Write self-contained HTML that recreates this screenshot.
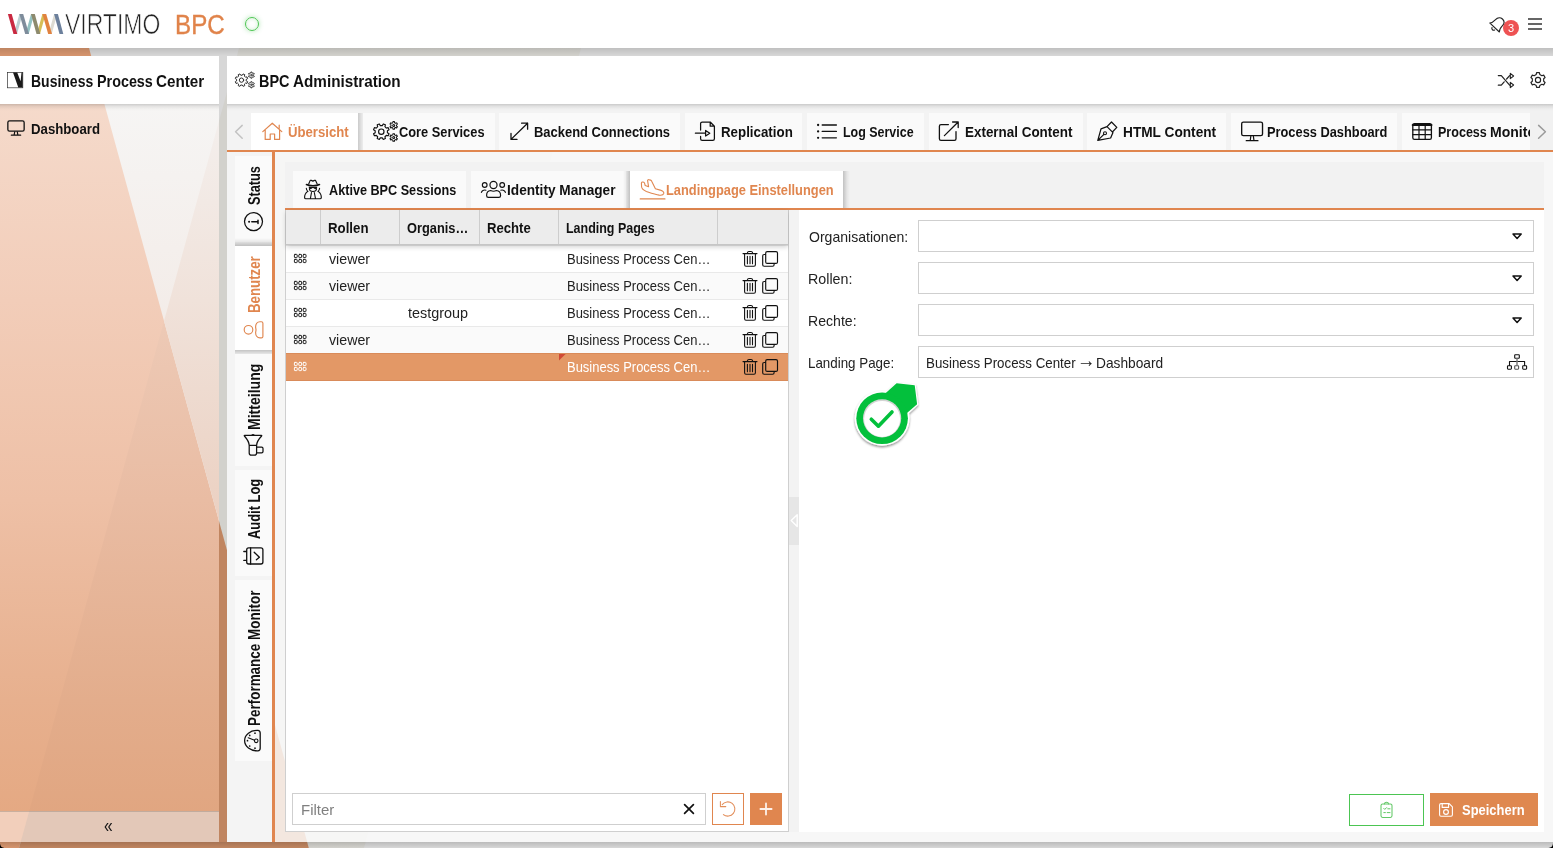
<!DOCTYPE html><html lang="de"><head><meta charset="utf-8"><title>BPC Administration</title><style>
*{box-sizing:border-box;margin:0;padding:0}
html,body{width:1553px;height:848px;overflow:hidden}
body{position:relative;font-family:"Liberation Sans",sans-serif;background:#d6d5d3;color:#1a1a1a}
#app{position:absolute;left:0;top:0;width:1553px;height:848px;overflow:hidden;will-change:transform}
.abs,.t{position:absolute}
.t{white-space:nowrap;display:block}
#bg{position:absolute;left:0;top:0}
#hdr{position:absolute;left:0;top:0;width:1553px;height:48px;background:#fff}
#hshadow{position:absolute;left:0;top:48px;width:1553px;height:8px;background:linear-gradient(rgba(0,0,0,.11),rgba(0,0,0,0))}
#side{position:absolute;left:0;top:56px;width:219px;height:786px;overflow:hidden}
#sidehead{position:absolute;left:0;top:0;width:219px;height:48px;background:#fff}
#sidefoot{position:absolute;left:0;top:755px;width:219px;height:31px;border-top:1px solid rgba(150,135,125,.45)}
#main{position:absolute;left:227px;top:56px;width:1326px;height:786px;background:rgba(255,255,255,.8)}
#mainhead{position:absolute;left:0;top:0;width:1326px;height:48px;background:#fff;z-index:3}
#mainhead:after,#sidehead:after{content:'';position:absolute;left:0;top:100%;width:100%;height:7px;background:linear-gradient(rgba(0,0,0,.17),rgba(0,0,0,.07) 35%,rgba(0,0,0,.02) 70%,rgba(0,0,0,0))}
#tabbar{position:absolute;left:0;top:48px;width:1326px;height:46px;background:#f3f3f3}
#tabbar .line{position:absolute;left:0;top:46px;width:1326px;height:2px;background:#e0864f}
.tab{position:absolute;top:9px;height:37px;background:#fafafa}
.tab.act{background:#fff}
.tab.act:after{content:'';position:absolute;left:100%;top:0;width:6px;height:100%;background:linear-gradient(to right,rgba(0,0,0,.17),rgba(0,0,0,.06) 60%,rgba(0,0,0,0))}
#vbar{position:absolute;left:0;top:96px;width:45px;height:690px;background:#f4f4f4}
#vline{position:absolute;left:45px;top:96px;width:3px;height:690px;background:#e0864f}
.vtab{position:absolute;left:8px;width:37px;background:#fafafa}
.vtab.act{background:#fff}
.vtab.act:before{content:'';position:absolute;left:0;bottom:100%;width:100%;height:8px;background:linear-gradient(to top,rgba(0,0,0,.22),rgba(0,0,0,.07) 55%,rgba(0,0,0,0))}
.vtab.act:after{content:'';position:absolute;left:0;top:100%;width:100%;height:7px;background:linear-gradient(to bottom,rgba(0,0,0,.20),rgba(0,0,0,.06) 55%,rgba(0,0,0,0))}
#inner{position:absolute;left:58px;top:106px;width:1259px;height:670px;background:#f2f2f2}
#inner .line{position:absolute;left:0;top:46px;width:1259px;height:2px;background:#e0864f}
.itab{position:absolute;top:9px;height:37px;background:#fafafa}
.itab.act{background:#fff}
.itab.act:after{content:'';position:absolute;left:100%;top:0;width:7px;height:100%;background:linear-gradient(to right,rgba(0,0,0,.20),rgba(0,0,0,.05) 60%,rgba(0,0,0,0))}
.itab.act:before{content:'';position:absolute;right:100%;top:0;width:7px;height:100%;background:linear-gradient(to left,rgba(0,0,0,.20),rgba(0,0,0,.05) 60%,rgba(0,0,0,0))}
#grid{position:absolute;left:0;top:48px;width:504px;height:622px;background:#fff;border:1px solid #cfcfcf;border-top:none}
#ghead{position:absolute;left:0;top:0;width:502px;height:35px;background:#ececec;border-bottom:1px solid #c6c6c6;box-shadow:0 2px 5px rgba(0,0,0,.18)}
#ghead i{position:absolute;top:0;width:1px;height:34px;background:#cdcdcd}
.row{position:absolute;left:0;width:502px;height:27px;border-top:1px solid #e9e9e9;background:#fff}
.row.alt{background:#fafafa}
.row.sel{background:#e39866;border-bottom:1px solid #d98b5a;border-top:1px solid #d98b5a;height:28px}
#split{position:absolute;left:504px;top:48px;width:10px;height:622px;background:#f3f3f3}
#split b{position:absolute;left:0;top:287px;width:10px;height:48px;background:#e6e6e6}
#form{position:absolute;left:514px;top:48px;width:745px;height:622px;background:#fff}
.fld{position:absolute;left:119px;width:616px;height:32px;border:1px solid #cfcfcf;background:#fff}
.btn{position:absolute;height:32px}
svg{position:absolute;overflow:visible}
</style></head><body><div id="app"><svg id="bg" width="1553" height="848" viewBox="0 0 1553 848">
<defs><clipPath id="cband"><polygon points="252.3,0 594,0 364,848 19,848"/></clipPath></defs>
<rect width="1553" height="848" fill="#d7d7d7"/>
<polygon points="0,0 75.8,0 308.8,848 0,848" fill="#d6956e"/>
<g clip-path="url(#cband)"><rect width="1553" height="848" fill="#d2d1cc"/><polygon points="0,0 75.8,0 308.8,848 0,848" fill="#c08560"/></g>
<linearGradient id="bsh" x1="0" y1="842" x2="0" y2="848" gradientUnits="userSpaceOnUse"><stop offset="0" stop-color="#000" stop-opacity=".13"/><stop offset="1" stop-color="#000" stop-opacity="0"/></linearGradient>
<rect x="0" y="842" width="1553" height="6" fill="url(#bsh)"/>
<path d="M0,843.5 Q0.4,847.6 4.5,848 H0Z M1553,843.5 Q1552.6,847.6 1548.5,848 H1553Z" fill="#000"/>
</svg><div id="hdr"><span class="t" style="font-size:29px;font-weight:normal;color:#222;line-height:29px;left:65.40px;top:10px;transform:scaleX(0.7917);transform-origin:0 24px;-webkit-text-stroke:.7px #fff;">VIRTIMO</span><span class="t" style="font-size:28px;font-weight:normal;color:#e0834a;line-height:28px;left:174.77px;top:11px;transform:scaleX(0.8636);transform-origin:0 23px;-webkit-text-stroke:.35px #e0834a;">BPC</span><div class="abs" style="left:245px;top:17px;width:14px;height:14px;border-radius:50%;border:1.3px solid #4cc552;box-shadow:0 0 5px rgba(76,197,82,.45), inset 0 0 4px rgba(76,197,82,.25)"></div><div class="abs" style="left:1503px;top:20px;width:16px;height:16px;border-radius:50%;background:#ee5253"></div><span class="t" style="font-size:11px;font-weight:normal;color:#fff;line-height:11px;left:1508.10px;top:23px;transform:scaleX(1.0000);transform-origin:0 9px;">3</span><div class="abs" style="left:1528px;top:18px;width:14px;height:2px;background:#666"></div><div class="abs" style="left:1528px;top:23px;width:14px;height:2px;background:#666"></div><div class="abs" style="left:1528px;top:28px;width:14px;height:2px;background:#666"></div></div><div id="hshadow"></div><div id="side"><svg width="219" height="786" viewBox="0 56 219 786" style="left:0;top:0"><defs><linearGradient id="s1" x1="0" y1="104" x2="0" y2="842" gradientUnits="userSpaceOnUse"><stop offset="0.000" stop-color="#f5dacb"/><stop offset="0.266" stop-color="#f2cdb9"/><stop offset="0.537" stop-color="#eec0a6"/><stop offset="0.808" stop-color="#e7b08e"/><stop offset="1.000" stop-color="#e4a780"/></linearGradient><linearGradient id="s2" x1="0" y1="104" x2="0" y2="842" gradientUnits="userSpaceOnUse"><stop offset="0.000" stop-color="#f1dccf"/><stop offset="0.306" stop-color="#edc9b5"/><stop offset="0.537" stop-color="#e9bca3"/><stop offset="0.808" stop-color="#e3ad8c"/><stop offset="1.000" stop-color="#e0a47e"/></linearGradient><linearGradient id="s3" x1="0" y1="104" x2="0" y2="842" gradientUnits="userSpaceOnUse"><stop offset="0.000" stop-color="#f6f5f4"/><stop offset="0.294" stop-color="#f3ece8"/></linearGradient><linearGradient id="s4" x1="0" y1="104" x2="0" y2="842" gradientUnits="userSpaceOnUse"><stop offset="0.000" stop-color="#f4f0ee"/><stop offset="0.266" stop-color="#f0e2da"/><stop offset="0.569" stop-color="#ebd0c1"/></linearGradient></defs><rect x="0" y="56" width="219" height="786" fill="url(#s1)"/><polygon points="164,321 219,521 219,842 20.7,842" fill="url(#s2)"/><polygon points="104.4,104 219,104 219,521" fill="url(#s3)"/><polygon points="219,121 219,521 164,321" fill="url(#s4)"/><rect x="0" y="811" width="219" height="31" fill="#f2cfbb"/><polygon points="29.3,811 219,811 219,842 20.7,842" fill="#e3c8b8"/></svg><div id="sidehead"><span class="t" style="font-size:16.5px;font-weight:bold;color:#111;line-height:16.5px;left:30.85px;top:17px;transform:scaleX(0.8478);transform-origin:0 14px;">Business</span><span class="t" style="font-size:16.5px;font-weight:bold;color:#111;line-height:16.5px;left:96.53px;top:17px;transform:scaleX(0.8694);transform-origin:0 14px;">Process</span><span class="t" style="font-size:16.5px;font-weight:bold;color:#111;line-height:16.5px;left:155.90px;top:17px;transform:scaleX(0.9216);transform-origin:0 14px;">Center</span></div><span class="t" style="font-size:15.5px;font-weight:bold;color:#111;line-height:15.5px;left:30.65px;top:65px;transform:scaleX(0.8517);transform-origin:0 13px;">Dashboard</span><div id="sidefoot"></div><span class="t" style="font-size:19.5px;font-weight:normal;color:#151515;line-height:19.5px;left:104.20px;top:760px;transform:scaleX(0.8000);transform-origin:0 16px;">«</span></div><div id="main"><div id="mainhead"><span class="t" style="font-size:16.5px;font-weight:bold;color:#111;line-height:16.5px;left:32.12px;top:17px;transform:scaleX(0.8756);transform-origin:0 14px;">BPC</span><span class="t" style="font-size:16.5px;font-weight:bold;color:#111;line-height:16.5px;left:66.30px;top:17px;transform:scaleX(0.9249);transform-origin:0 14px;">Administration</span></div><div id="tabbar"><div class="abs" style="left:1303px;top:0;width:23px;height:46px;background:#f1f1f1"></div><div class="tab act" style="left:24px;width:107px;overflow:visible"><span class="t" style="font-size:15.5px;font-weight:bold;color:#e0864f;line-height:15.5px;left:36.50px;top:11px;transform:scaleX(0.8482);transform-origin:0 13px;">Übersicht</span></div><div class="tab" style="left:136px;width:132px;overflow:visible"><span class="t" style="font-size:15.5px;font-weight:bold;color:#111;line-height:15.5px;left:36.00px;top:11px;transform:scaleX(0.8270);transform-origin:0 13px;">Core Services</span></div><div class="tab" style="left:272px;width:181px;overflow:visible"><span class="t" style="font-size:15.5px;font-weight:bold;color:#111;line-height:15.5px;left:35.46px;top:11px;transform:scaleX(0.8358);transform-origin:0 13px;">Backend Connections</span></div><div class="tab" style="left:458px;width:117px;overflow:visible"><span class="t" style="font-size:15.5px;font-weight:bold;color:#111;line-height:15.5px;left:35.64px;top:11px;transform:scaleX(0.8590);transform-origin:0 13px;">Replication</span></div><div class="tab" style="left:580px;width:117px;overflow:visible"><span class="t" style="font-size:15.5px;font-weight:bold;color:#111;line-height:15.5px;left:35.50px;top:11px;transform:scaleX(0.8035);transform-origin:0 13px;">Log Service</span></div><div class="tab" style="left:702px;width:154px;overflow:visible"><span class="t" style="font-size:15.5px;font-weight:bold;color:#111;line-height:15.5px;left:36.33px;top:11px;transform:scaleX(0.8661);transform-origin:0 13px;">External Content</span></div><div class="tab" style="left:860px;width:139px;overflow:visible"><span class="t" style="font-size:15.5px;font-weight:bold;color:#111;line-height:15.5px;left:36.32px;top:11px;transform:scaleX(0.8823);transform-origin:0 13px;">HTML Content</span></div><div class="tab" style="left:1004px;width:166px;overflow:visible"><span class="t" style="font-size:15.5px;font-weight:bold;color:#111;line-height:15.5px;left:36.37px;top:11px;transform:scaleX(0.8271);transform-origin:0 13px;">Process Dashboard</span></div><div class="tab" style="left:1175px;width:128px;overflow:hidden"><span class="t" style="font-size:15.5px;font-weight:bold;color:#111;line-height:15.5px;left:35.89px;top:11px;transform:scaleX(0.8092);transform-origin:0 13px;">Process</span><span class="t" style="font-size:15.5px;font-weight:bold;color:#111;line-height:15.5px;left:87.89px;top:11px;transform:scaleX(0.9053);transform-origin:0 13px;">Monitor</span></div><div class="line"></div></div><div id="vbar"><div class="vtab" style="top:4px;height:86px"><span class="t" style="font-size:16.3px;font-weight:bold;color:#111;line-height:16.3px;left:10.70px;top:49.00px;transform:rotate(-90deg) translate(0,14px) scaleX(0.7806) translate(0,-14px);transform-origin:0 0;">Status</span></div><div class="vtab act" style="top:94px;height:104px"><span class="t" style="font-size:16.3px;font-weight:bold;color:#e0864f;line-height:16.3px;left:10.70px;top:67.32px;transform:rotate(-90deg) translate(0,14px) scaleX(0.8151) translate(0,-14px);transform-origin:0 0;">Benutzer</span></div><div class="vtab" style="top:202px;height:112px"><span class="t" style="font-size:16.3px;font-weight:bold;color:#111;line-height:16.3px;left:10.70px;top:75.86px;transform:rotate(-90deg) translate(0,14px) scaleX(0.8622) translate(0,-14px);transform-origin:0 0;">Mitteilung</span></div><div class="vtab" style="top:318px;height:106px"><span class="t" style="font-size:16.3px;font-weight:bold;color:#111;line-height:16.3px;left:10.70px;top:69.20px;transform:rotate(-90deg) translate(0,14px) scaleX(0.7919) translate(0,-14px);transform-origin:0 0;">Audit Log</span></div><div class="vtab" style="top:428px;height:181px"><span class="t" style="font-size:16.3px;font-weight:bold;color:#111;line-height:16.3px;left:10.70px;top:146.23px;transform:rotate(-90deg) translate(0,14px) scaleX(0.8268) translate(0,-14px);transform-origin:0 0;">Performance Monitor</span></div></div><div id="vline"></div><div id="inner"><div class="itab" style="left:8px;width:173px"><span class="t" style="font-size:15.5px;font-weight:bold;color:#111;line-height:15.5px;left:36.30px;top:11px;transform:scaleX(0.8158);transform-origin:0 13px;">Aktive BPC Sessions</span></div><div class="itab" style="left:186px;width:155px"><span class="t" style="font-size:15.5px;font-weight:bold;color:#111;line-height:15.5px;left:35.72px;top:11px;transform:scaleX(0.8810);transform-origin:0 13px;">Identity Manager</span></div><div class="itab act" style="left:345px;width:213px"><span class="t" style="font-size:15.5px;font-weight:bold;color:#e0864f;line-height:15.5px;left:36.07px;top:11px;transform:scaleX(0.8283);transform-origin:0 13px;">Landingpage Einstellungen</span></div><div class="line"></div><div id="grid"><div class="row" style="top:35px"><span class="t" style="font-size:14.5px;font-weight:normal;color:#222;line-height:14.5px;left:43.30px;top:6px;transform:scaleX(0.9793);transform-origin:0 12px;">viewer</span><span class="t" style="font-size:14.5px;font-weight:normal;color:#222;line-height:14.5px;left:280.71px;top:6px;transform:scaleX(0.8938);transform-origin:0 12px;">Business Process Cen…</span></div><div class="row alt" style="top:62px"><span class="t" style="font-size:14.5px;font-weight:normal;color:#222;line-height:14.5px;left:43.30px;top:6px;transform:scaleX(0.9793);transform-origin:0 12px;">viewer</span><span class="t" style="font-size:14.5px;font-weight:normal;color:#222;line-height:14.5px;left:280.71px;top:6px;transform:scaleX(0.8938);transform-origin:0 12px;">Business Process Cen…</span></div><div class="row" style="top:89px"><span class="t" style="font-size:14.5px;font-weight:normal;color:#222;line-height:14.5px;left:122.00px;top:6px;transform:scaleX(0.9935);transform-origin:0 12px;">testgroup</span><span class="t" style="font-size:14.5px;font-weight:normal;color:#222;line-height:14.5px;left:280.71px;top:6px;transform:scaleX(0.8938);transform-origin:0 12px;">Business Process Cen…</span></div><div class="row alt" style="top:116px"><span class="t" style="font-size:14.5px;font-weight:normal;color:#222;line-height:14.5px;left:43.30px;top:6px;transform:scaleX(0.9793);transform-origin:0 12px;">viewer</span><span class="t" style="font-size:14.5px;font-weight:normal;color:#222;line-height:14.5px;left:280.71px;top:6px;transform:scaleX(0.8938);transform-origin:0 12px;">Business Process Cen…</span></div><div class="row sel" style="top:143px"><span class="t" style="font-size:14.5px;font-weight:normal;color:#fff;line-height:14.5px;left:280.71px;top:6px;transform:scaleX(0.8938);transform-origin:0 12px;">Business Process Cen…</span></div><div id="ghead"><i style="left:34px"></i><i style="left:113px"></i><i style="left:193px"></i><i style="left:272px"></i><i style="left:431px"></i><span class="t" style="font-size:14.5px;font-weight:bold;color:#111;line-height:14.5px;left:42.40px;top:11px;transform:scaleX(0.9137);transform-origin:0 12px;">Rollen</span><span class="t" style="font-size:14.5px;font-weight:bold;color:#111;line-height:14.5px;left:121.00px;top:11px;transform:scaleX(0.8851);transform-origin:0 12px;">Organis…</span><span class="t" style="font-size:14.5px;font-weight:bold;color:#111;line-height:14.5px;left:201.20px;top:11px;transform:scaleX(0.9050);transform-origin:0 12px;">Rechte</span><span class="t" style="font-size:14.5px;font-weight:bold;color:#111;line-height:14.5px;left:280.10px;top:11px;transform:scaleX(0.8597);transform-origin:0 12px;">Landing Pages</span></div><div class="abs" style="left:6px;top:583px;width:414px;height:32px;border:1px solid #cfcfcf;background:#fff"><span class="t" style="font-size:14.5px;font-weight:normal;color:#808080;line-height:14.5px;left:7.67px;top:9px;transform:scaleX(1.0321);transform-origin:0 12px;">Filter</span></div><div class="abs" style="left:426px;top:583px;width:32px;height:32px;border:1px solid #e0864f;background:#fff"></div><div class="abs" style="left:464px;top:583px;width:32px;height:32px;background:#e0864f"></div></div><div id="split"><b></b></div><div id="form"><span class="t" style="font-size:14.5px;font-weight:normal;color:#222;line-height:14.5px;left:10.40px;top:20px;transform:scaleX(0.9690);transform-origin:0 12px;">Organisationen:</span><div class="fld" style="top:10px"></div><span class="t" style="font-size:14.5px;font-weight:normal;color:#222;line-height:14.5px;left:9.42px;top:62px;transform:scaleX(0.9836);transform-origin:0 12px;">Rollen:</span><div class="fld" style="top:52px"></div><span class="t" style="font-size:14.5px;font-weight:normal;color:#222;line-height:14.5px;left:9.43px;top:104px;transform:scaleX(0.9720);transform-origin:0 12px;">Rechte:</span><div class="fld" style="top:94px"></div><span class="t" style="font-size:14.5px;font-weight:normal;color:#222;line-height:14.5px;left:9.48px;top:146px;transform:scaleX(0.9213);transform-origin:0 12px;">Landing Page:</span><div class="fld" style="top:136px"><span class="t" style="font-size:14.5px;font-weight:normal;color:#222;line-height:14.5px;left:7.48px;top:9px;transform:scaleX(0.9193);transform-origin:0 12px;">Business Process Center</span><span class="t" style="font-size:14.5px;font-weight:normal;color:#222;line-height:14.5px;left:177.25px;top:9px;transform:scaleX(0.9460);transform-origin:0 12px;">Dashboard</span><span class="t" style="font-size:20px;font-weight:normal;color:#222;line-height:20px;left:158.20px;top:3px;transform:scaleX(0.9250);transform-origin:0 17px;">→</span></div><div class="btn" style="left:550px;top:584px;width:75px;border:1px solid #4cc552;background:#fff"></div><div class="btn" style="left:631px;top:583px;width:108px;height:33px;background:#df884f"><span class="t" style="font-size:15.5px;font-weight:bold;color:#fff;line-height:15.5px;left:32.20px;top:9px;transform:scaleX(0.8352);transform-origin:0 13px;">Speichern</span></div></div></div></div><svg id="icons" width="1553" height="848" viewBox="0 0 1553 848" style="left:0;top:0;pointer-events:none;z-index:10"><defs><filter id="mk" x="-20%" y="-20%" width="140%" height="150%"><feDropShadow dx="0" dy="1.5" stdDeviation="1.3" flood-color="#000" flood-opacity=".45"/></filter></defs><polygon points="13.8,34.0 17.0,34.0 22.599999999999998,14.0 19.4,14.0" fill="#bccfd2"/><polygon points="25.5,34.0 28.7,34.0 34.199999999999996,14.0 31.0,14.0" fill="#93c3c3"/><polygon points="36.8,34.0 39.99999999999999,34.0 45.599999999999994,14.0 42.4,14.0" fill="#d6be57"/><polygon points="48.5,34.0 51.699999999999996,34.0 57.3,14.0 54.1,14.0" fill="#dddbd3"/><polygon points="7.9,14.0 11.7,14.0 17.3,34.0 13.5,34.0" fill="#c92a41"/><polygon points="19.4,14.0 23.2,14.0 29.0,34.0 25.2,34.0" fill="#7e8c9b"/><polygon points="31.0,14.0 34.8,14.0 40.3,34.0 36.5,34.0" fill="#8d8a6e"/><polygon points="42.4,14.0 46.199999999999996,14.0 52.0,34.0 48.2,34.0" fill="#e1823f"/><polygon points="54.1,14.0 57.9,14.0 63.3,34.0 59.5,34.0" fill="#6c809c"/><g transform="translate(1497.4,24.4) rotate(43)"><path d="M-6.6,4.2 H6.6 C4.6,2.4 4.6,0 4.6,-2.2 C4.6,-5.4 2.6,-7.4 0,-7.4 C-2.6,-7.4 -4.6,-5.4 -4.6,-2.2 C-4.6,0 -4.6,2.4 -6.6,4.2Z M-1.8,6 A1.9,1.9 0 0 0 1.8,6" fill="none" stroke="#222" stroke-width="1.1" stroke-linecap="round" stroke-linejoin="round" /></g><rect x="7.4" y="72.4" width="15.4" height="15.4" fill="#fff" stroke="#333" stroke-width=".7"/><polygon points="13,72.6 17.2,72.6 20.6,81.2 21.5,72.6 22.7,72.6 22.7,87.6 18.3,87.6" fill="#1a1a1a"/><rect x="7.8500000000000005" y="120.85000000000001" width="16.3" height="10.322" rx="1.7" fill="none" stroke="#111" stroke-width="1.3" stroke-linecap="round" stroke-linejoin="round" /><path d="M14.7,131.822 L14.1,135.15 M17.3,131.822 L17.9,135.15 M11.335999999999999,135.15 L20.664,135.15" fill="none" stroke="#111" stroke-width="1.1700000000000002" stroke-linecap="round" stroke-linejoin="round" /><g transform="translate(234.7,71.9) scale(0.8)"><path d="M14.62,11.27 L16.25,12.29 L15.39,14.37 L13.52,13.94 L12.14,15.32 L12.57,17.19 L10.49,18.05 L9.47,16.42 L7.53,16.42 L6.51,18.05 L4.43,17.19 L4.86,15.32 L3.48,13.94 L1.61,14.37 L0.75,12.29 L2.38,11.27 L2.38,9.33 L0.75,8.31 L1.61,6.23 L3.48,6.66 L4.86,5.28 L4.43,3.41 L6.51,2.55 L7.53,4.18 L9.47,4.18 L10.49,2.55 L12.57,3.41 L12.14,5.28 L13.52,6.66 L15.39,6.23 L16.25,8.31 L14.62,9.33Z" fill="none" stroke="#222" stroke-width="1.1874999999999998" stroke-linecap="round" stroke-linejoin="round" /><circle cx="8.5" cy="10.3" r="2.7" fill="none" stroke="#222" stroke-width="1.1874999999999998" stroke-linecap="round" stroke-linejoin="round" /><path d="M23.64,4.58 L24.58,5.28 L23.85,6.55 L22.77,6.08 L21.77,6.66 L21.63,7.83 L20.17,7.83 L20.03,6.66 L19.03,6.08 L17.95,6.55 L17.22,5.28 L18.16,4.58 L18.16,3.42 L17.22,2.72 L17.95,1.45 L19.03,1.92 L20.03,1.34 L20.17,0.17 L21.63,0.17 L21.77,1.34 L22.77,1.92 L23.85,1.45 L24.58,2.72 L23.64,3.42Z" fill="none" stroke="#222" stroke-width="1.0687499999999999" stroke-linecap="round" stroke-linejoin="round" /><circle cx="20.9" cy="4.0" r="1.0" fill="none" stroke="#222" stroke-width="1.0687499999999999" stroke-linecap="round" stroke-linejoin="round" /><path d="M23.64,16.68 L24.58,17.38 L23.85,18.65 L22.77,18.18 L21.77,18.76 L21.63,19.93 L20.17,19.93 L20.03,18.76 L19.03,18.18 L17.95,18.65 L17.22,17.38 L18.16,16.68 L18.16,15.52 L17.22,14.82 L17.95,13.55 L19.03,14.02 L20.03,13.44 L20.17,12.27 L21.63,12.27 L21.77,13.44 L22.77,14.02 L23.85,13.55 L24.58,14.82 L23.64,15.52Z" fill="none" stroke="#222" stroke-width="1.0687499999999999" stroke-linecap="round" stroke-linejoin="round" /><circle cx="20.9" cy="16.1" r="1.0" fill="none" stroke="#222" stroke-width="1.0687499999999999" stroke-linecap="round" stroke-linejoin="round" /></g><path d="M1498.3,75.6 H1501.3 L1509.6,85.2 M1498.3,85.2 H1501.3 L1504.2,81.8 M1506.6,79 L1509.6,75.6" fill="none" stroke="#222" stroke-width="1.2" stroke-linecap="round" stroke-linejoin="round" /><path d="M1510.3,73.4 L1513.6,76 L1510.3,78.6Z M1510.3,82.4 L1513.6,85 L1510.3,87.6Z" fill="none" stroke="#222" stroke-width="1.1" stroke-linecap="round" stroke-linejoin="round" /><path d="M1539.79,85.52 L1539.41,87.37 L1536.59,87.37 L1536.21,85.52 L1534.12,84.31 L1532.32,84.90 L1530.92,82.47 L1532.33,81.21 L1532.33,78.79 L1530.92,77.53 L1532.32,75.10 L1534.12,75.69 L1536.21,74.48 L1536.59,72.63 L1539.41,72.63 L1539.79,74.48 L1541.88,75.69 L1543.68,75.10 L1545.08,77.53 L1543.67,78.79 L1543.67,81.21 L1545.08,82.47 L1543.68,84.90 L1541.88,84.31Z" fill="none" stroke="#222" stroke-width="1.15" stroke-linecap="round" stroke-linejoin="round" /><circle cx="1538" cy="80" r="2.6" fill="none" stroke="#222" stroke-width="1.15" stroke-linecap="round" stroke-linejoin="round" /><path d="M242.2,125.4 L235.6,131.8 L242.2,138.2" fill="none" stroke="#c2c2c2" stroke-width="1.5" stroke-linecap="round" stroke-linejoin="round" /><path d="M1538.6,125.4 L1545.4,131.8 L1538.6,138.2" fill="none" stroke="#9a9a9a" stroke-width="1.5" stroke-linecap="round" stroke-linejoin="round" /><path d="M262.8,131.6 L272.3,123.2 L281.8,131.6 M265.2,130 V139.4 H270.2 V134 H274.6 V139.4 H279.6 V130 M279.2,128.6 V125.2" fill="none" stroke="#e0864f" stroke-width="1.2" stroke-linecap="round" stroke-linejoin="round" /><g transform="translate(372.8,121.4) scale(1.0)"><path d="M14.62,11.27 L16.25,12.29 L15.39,14.37 L13.52,13.94 L12.14,15.32 L12.57,17.19 L10.49,18.05 L9.47,16.42 L7.53,16.42 L6.51,18.05 L4.43,17.19 L4.86,15.32 L3.48,13.94 L1.61,14.37 L0.75,12.29 L2.38,11.27 L2.38,9.33 L0.75,8.31 L1.61,6.23 L3.48,6.66 L4.86,5.28 L4.43,3.41 L6.51,2.55 L7.53,4.18 L9.47,4.18 L10.49,2.55 L12.57,3.41 L12.14,5.28 L13.52,6.66 L15.39,6.23 L16.25,8.31 L14.62,9.33Z" fill="none" stroke="#111" stroke-width="1.15" stroke-linecap="round" stroke-linejoin="round" /><circle cx="8.5" cy="10.3" r="2.7" fill="none" stroke="#111" stroke-width="1.15" stroke-linecap="round" stroke-linejoin="round" /><path d="M23.64,4.58 L24.58,5.28 L23.85,6.55 L22.77,6.08 L21.77,6.66 L21.63,7.83 L20.17,7.83 L20.03,6.66 L19.03,6.08 L17.95,6.55 L17.22,5.28 L18.16,4.58 L18.16,3.42 L17.22,2.72 L17.95,1.45 L19.03,1.92 L20.03,1.34 L20.17,0.17 L21.63,0.17 L21.77,1.34 L22.77,1.92 L23.85,1.45 L24.58,2.72 L23.64,3.42Z" fill="none" stroke="#111" stroke-width="1.035" stroke-linecap="round" stroke-linejoin="round" /><circle cx="20.9" cy="4.0" r="1.0" fill="none" stroke="#111" stroke-width="1.035" stroke-linecap="round" stroke-linejoin="round" /><path d="M23.64,16.68 L24.58,17.38 L23.85,18.65 L22.77,18.18 L21.77,18.76 L21.63,19.93 L20.17,19.93 L20.03,18.76 L19.03,18.18 L17.95,18.65 L17.22,17.38 L18.16,16.68 L18.16,15.52 L17.22,14.82 L17.95,13.55 L19.03,14.02 L20.03,13.44 L20.17,12.27 L21.63,12.27 L21.77,13.44 L22.77,14.02 L23.85,13.55 L24.58,14.82 L23.64,15.52Z" fill="none" stroke="#111" stroke-width="1.035" stroke-linecap="round" stroke-linejoin="round" /><circle cx="20.9" cy="16.1" r="1.0" fill="none" stroke="#111" stroke-width="1.035" stroke-linecap="round" stroke-linejoin="round" /></g><path d="M511,139.4 L527.6,123.2 M521.6,123.2 H527.6 V129.2 M511,133.4 V139.4 H517" fill="none" stroke="#111" stroke-width="1.3" stroke-linecap="round" stroke-linejoin="round" /><path d="M700.6,130 V123.6 Q700.6,122 702.2,122 H710.2 L714.4,126.2 V138.8 Q714.4,140.4 712.8,140.4 H702.2 Q700.6,140.4 700.6,138.8 V136.4 M710.2,122 V126.2 H714.4 M695.4,133.2 H705.6 M705.6,130.4 L709.8,133.2 L705.6,136Z" fill="none" stroke="#111" stroke-width="1.25" stroke-linecap="round" stroke-linejoin="round" /><circle cx="818.1" cy="125.0" r="1.15" fill="#111"/><path d="M822.2,125.0 H836.4" fill="none" stroke="#111" stroke-width="1.3" stroke-linecap="round" stroke-linejoin="round" /><circle cx="818.1" cy="131.4" r="1.15" fill="#111"/><path d="M822.2,131.4 H836.4" fill="none" stroke="#111" stroke-width="1.3" stroke-linecap="round" stroke-linejoin="round" /><circle cx="818.1" cy="137.8" r="1.15" fill="#111"/><path d="M822.2,137.8 H836.4" fill="none" stroke="#111" stroke-width="1.3" stroke-linecap="round" stroke-linejoin="round" /><path d="M948.4,124.6 H941 Q939.4,124.6 939.4,126.2 V138.8 Q939.4,140.4 941,140.4 H954.4 Q956,140.4 956,138.8 V131.6 M944.4,135.6 L957.4,122.8 M952.6,122 H958.2 V127.6" fill="none" stroke="#111" stroke-width="1.3" stroke-linecap="round" stroke-linejoin="round" /><path d="M1097.8,140.4 L1101,128.8 L1107,126.6 L1113,132.6 L1110.6,138 Z M1097.8,140.4 L1103.9,134.4 M1107,126.6 L1111.5,122 L1116.8,127.4 L1112.4,132" fill="none" stroke="#111" stroke-width="1.25" stroke-linecap="round" stroke-linejoin="round" /><circle cx="1105" cy="133.3" r="1.5" fill="none" stroke="#111" stroke-width="1.1" stroke-linecap="round" stroke-linejoin="round" /><rect x="1241.675" y="122.075" width="20.849999999999998" height="13.55" rx="1.7" fill="none" stroke="#111" stroke-width="1.35" stroke-linecap="round" stroke-linejoin="round" /><path d="M1250.8,136.3 L1250.1999999999998,140.725 M1253.3999999999999,136.3 L1254.0,140.725 M1246.2169999999999,140.725 L1257.983,140.725" fill="none" stroke="#111" stroke-width="1.215" stroke-linecap="round" stroke-linejoin="round" /><rect x="1412.8" y="123.6" width="18.6" height="15.8" rx="1.6" fill="none" stroke="#111" stroke-width="1.3" stroke-linecap="round" stroke-linejoin="round" /><path d="M1412.8,125 H1431.4" fill="none" stroke="#111" stroke-width="2.2" stroke-linecap="round" stroke-linejoin="round" /><path d="M1412.8,129.8 H1431.4 M1412.8,134.6 H1431.4 M1419,124 V139.4 M1425.2,124 V139.4" fill="none" stroke="#111" stroke-width="1.2" stroke-linecap="round" stroke-linejoin="round" /><circle cx="253.5" cy="221.6" r="9" fill="none" stroke="#111" stroke-width="1.25" stroke-linecap="round" stroke-linejoin="round" /><circle cx="249.1" cy="221.8" r="1.05" fill="#111"/><path d="M251.8,221.8 H258 M258,220.2 V223.4" fill="none" stroke="#111" stroke-width="1.5" stroke-linecap="round" stroke-linejoin="round" /><circle cx="248.5" cy="329.8" r="4.3" fill="none" stroke="#e0864f" stroke-width="1.15" stroke-linecap="round" stroke-linejoin="round" /><path d="M262.9,323.2 Q262.9,321.7 261.4,321.7 H260 C257,321.7 255.6,324.5 255.6,327 Q256.4,329.8 255.6,332.6 C255.6,335 257,337.9 260,337.9 H261.4 Q262.9,337.9 262.9,336.4 Z" fill="none" stroke="#e0864f" stroke-width="1.15" stroke-linecap="round" stroke-linejoin="round" /><path d="M244.6,435.3 H261.4 Q262,435.3 261.6,436 C258.6,439.2 256.8,442 256.6,445.2 V453 Q256.6,455.2 254.4,455.2 H251.4 Q249.2,455.2 249.2,453 V445.2 C249,442 247.2,439.2 244.4,436 Q244,435.3 244.6,435.3 Z M249.2,445.3 H256.6 M256.6,447 H261.6 Q263,447 263,448.4 V451.4 Q263,452.8 261.6,452.8 H256.6" fill="none" stroke="#111" stroke-width="1.25" stroke-linecap="round" stroke-linejoin="round" /><path d="M251.2,435 Q253,433.2 254.8,435Z" fill="#111"/><rect x="246.7" y="547.8" width="16.2" height="16.2" rx="2" fill="none" stroke="#111" stroke-width="1.3" stroke-linecap="round" stroke-linejoin="round" /><path d="M250.6,547.8 V564 M243.8,551.5 H246.4 M243.8,560.4 H246.4 M254.2,552.2 L259.4,557.3 L256.4,559.8" fill="none" stroke="#111" stroke-width="1.3" stroke-linecap="round" stroke-linejoin="round" /><path d="M260.2,733 Q260.2,730.6 257.8,730.4 C250.4,730.2 244.6,734.6 244.6,740.6 C244.6,746.6 250.4,751 257.8,750.8 Q260.2,750.6 260.2,748.2 Z" fill="none" stroke="#111" stroke-width="1.3" stroke-linecap="round" stroke-linejoin="round" /><circle cx="256.2" cy="740.8" r="1.8" fill="none" stroke="#111" stroke-width="1.1" stroke-linecap="round" stroke-linejoin="round" /><path d="M254.6,740.2 L248.2,737.8" fill="none" stroke="#111" stroke-width="1.1" stroke-linecap="round" stroke-linejoin="round" /><circle cx="255" cy="733.2" r=".85" fill="#111"/><circle cx="249.7" cy="735.4" r=".85" fill="#111"/><circle cx="247.5" cy="740.7" r=".85" fill="#111"/><circle cx="249.7" cy="746" r=".85" fill="#111"/><circle cx="255" cy="748.2" r=".85" fill="#111"/><path d="M308.7,184 L310,180.9 Q310.4,180 311.3,180.4 L312.9,181.1 L314.5,180.4 Q315.4,180 315.8,180.9 L317.2,184" fill="none" stroke="#111" stroke-width="1.15" stroke-linecap="round" stroke-linejoin="round" /><path d="M306.5,184.6 C309.2,186.1 316.7,186.1 319.4,184.6" fill="none" stroke="#111" stroke-width="1.7" stroke-linecap="round" stroke-linejoin="round" /><path d="M308.8,186.7 H317.1 V187.9 Q317,189.1 315.4,189.1 Q314,189.1 313.4,188 H312.5 Q311.9,189.1 310.5,189.1 Q308.9,189.1 308.8,187.9Z" fill="#111"/><path d="M309.4,189 C309.7,192.3 316.2,192.3 316.5,189 M306.3,188.3 Q306.6,190.7 307.9,191.5 M319.6,188.3 Q319.3,190.7 318,191.5 M307.7,191.4 C305.2,193.2 304.5,195 304.6,197.6 Q304.7,198.7 305.8,198.7 H320.1 Q321.2,198.7 321.3,197.6 C321.4,195 320.7,193.2 318.2,191.4 M311.5,192.5 L310.4,198.5 M314.3,192.5 L315.5,198.5" fill="none" stroke="#111" stroke-width="1.15" stroke-linecap="round" stroke-linejoin="round" /><circle cx="493.5" cy="185" r="3.55" fill="none" stroke="#111" stroke-width="1.2" stroke-linecap="round" stroke-linejoin="round" /><path d="M486.6,195.4 C486.6,192.4 488.6,190.7 490.6,190.5 Q493.5,192 496.4,190.5 C498.6,190.7 500.6,192.4 500.6,195.4 Q500.6,197.3 498.8,197.3 H488.4 Q486.6,197.3 486.6,195.4Z" fill="none" stroke="#111" stroke-width="1.2" stroke-linecap="round" stroke-linejoin="round" /><circle cx="484.7" cy="185" r="2.35" fill="none" stroke="#111" stroke-width="1.15" stroke-linecap="round" stroke-linejoin="round" /><circle cx="502.2" cy="185" r="2.35" fill="none" stroke="#111" stroke-width="1.15" stroke-linecap="round" stroke-linejoin="round" /><path d="M481.4,192.4 C481.8,190.6 483.6,189.6 486,190.2 M505.4,192.4 C505,190.6 503.2,189.6 500.8,190.2" fill="none" stroke="#111" stroke-width="1.15" stroke-linecap="round" stroke-linejoin="round" /><path d="M640.2,198.9 H665 M641.4,183 Q641.6,181.9 642.8,182 L643.8,182.3 Q644.5,182.6 644.7,183.6 L645.2,185.6 L648.6,186.8 L647.6,180.6 Q647.6,179.5 648.8,179.7 L650.6,180.1 Q651.3,180.3 651.7,181.2 L655.4,188.7 L660.2,190.1 C662.6,191 664,192.2 663.8,193.4 C663.4,195 661.6,195.4 659.2,195.1 C655,194.4 650,192.6 646.4,191.4 C644,190.4 641.8,188.6 641.6,187 Z" fill="none" stroke="#e0864f" stroke-width="1.1" stroke-linecap="round" stroke-linejoin="round" /><rect x="294.4" y="254.4" width="2.8" height="3.2" rx=".6" fill="none" stroke="#1a1a1a" stroke-width="0.95" stroke-linecap="round" stroke-linejoin="round" /><rect x="294.4" y="259.4" width="2.8" height="3.2" rx=".6" fill="none" stroke="#1a1a1a" stroke-width="0.95" stroke-linecap="round" stroke-linejoin="round" /><rect x="298.8" y="254.4" width="2.8" height="3.2" rx=".6" fill="none" stroke="#1a1a1a" stroke-width="0.95" stroke-linecap="round" stroke-linejoin="round" /><rect x="298.8" y="259.4" width="2.8" height="3.2" rx=".6" fill="none" stroke="#1a1a1a" stroke-width="0.95" stroke-linecap="round" stroke-linejoin="round" /><rect x="303.2" y="254.4" width="2.8" height="3.2" rx=".6" fill="none" stroke="#1a1a1a" stroke-width="0.95" stroke-linecap="round" stroke-linejoin="round" /><rect x="303.2" y="259.4" width="2.8" height="3.2" rx=".6" fill="none" stroke="#1a1a1a" stroke-width="0.95" stroke-linecap="round" stroke-linejoin="round" /><path d="M743,253.6 H757 M747.2,253.4 Q747.6,251.5 749,251.5 H751 Q752.4,251.5 752.8,253.4 M744.6,253.9 V264.8 Q744.6,266.2 746,266.2 H754 Q755.4,266.2 755.4,264.8 V253.9 M747.4,256.2 V263.8 M750,256.2 V263.8 M752.5,256.2 V263.8" fill="none" stroke="#111" stroke-width="1.1" stroke-linecap="round" stroke-linejoin="round" /><rect x="765.7" y="251.6" width="11.8" height="11.8" rx="1.5" fill="none" stroke="#111" stroke-width="1.15" stroke-linecap="round" stroke-linejoin="round" /><path d="M765.4,254.5 H764.2 Q762.7,254.5 762.7,256 V264.7 Q762.7,266.2 764.2,266.2 H772.6 Q774.1,266.2 774.1,264.7 V263.7" fill="none" stroke="#111" stroke-width="1.15" stroke-linecap="round" stroke-linejoin="round" /><rect x="294.4" y="281.4" width="2.8" height="3.2" rx=".6" fill="none" stroke="#1a1a1a" stroke-width="0.95" stroke-linecap="round" stroke-linejoin="round" /><rect x="294.4" y="286.4" width="2.8" height="3.2" rx=".6" fill="none" stroke="#1a1a1a" stroke-width="0.95" stroke-linecap="round" stroke-linejoin="round" /><rect x="298.8" y="281.4" width="2.8" height="3.2" rx=".6" fill="none" stroke="#1a1a1a" stroke-width="0.95" stroke-linecap="round" stroke-linejoin="round" /><rect x="298.8" y="286.4" width="2.8" height="3.2" rx=".6" fill="none" stroke="#1a1a1a" stroke-width="0.95" stroke-linecap="round" stroke-linejoin="round" /><rect x="303.2" y="281.4" width="2.8" height="3.2" rx=".6" fill="none" stroke="#1a1a1a" stroke-width="0.95" stroke-linecap="round" stroke-linejoin="round" /><rect x="303.2" y="286.4" width="2.8" height="3.2" rx=".6" fill="none" stroke="#1a1a1a" stroke-width="0.95" stroke-linecap="round" stroke-linejoin="round" /><path d="M743,280.6 H757 M747.2,280.4 Q747.6,278.5 749,278.5 H751 Q752.4,278.5 752.8,280.4 M744.6,280.9 V291.8 Q744.6,293.2 746,293.2 H754 Q755.4,293.2 755.4,291.8 V280.9 M747.4,283.2 V290.8 M750,283.2 V290.8 M752.5,283.2 V290.8" fill="none" stroke="#111" stroke-width="1.1" stroke-linecap="round" stroke-linejoin="round" /><rect x="765.7" y="278.6" width="11.8" height="11.8" rx="1.5" fill="none" stroke="#111" stroke-width="1.15" stroke-linecap="round" stroke-linejoin="round" /><path d="M765.4,281.5 H764.2 Q762.7,281.5 762.7,283 V291.7 Q762.7,293.2 764.2,293.2 H772.6 Q774.1,293.2 774.1,291.7 V290.7" fill="none" stroke="#111" stroke-width="1.15" stroke-linecap="round" stroke-linejoin="round" /><rect x="294.4" y="308.4" width="2.8" height="3.2" rx=".6" fill="none" stroke="#1a1a1a" stroke-width="0.95" stroke-linecap="round" stroke-linejoin="round" /><rect x="294.4" y="313.4" width="2.8" height="3.2" rx=".6" fill="none" stroke="#1a1a1a" stroke-width="0.95" stroke-linecap="round" stroke-linejoin="round" /><rect x="298.8" y="308.4" width="2.8" height="3.2" rx=".6" fill="none" stroke="#1a1a1a" stroke-width="0.95" stroke-linecap="round" stroke-linejoin="round" /><rect x="298.8" y="313.4" width="2.8" height="3.2" rx=".6" fill="none" stroke="#1a1a1a" stroke-width="0.95" stroke-linecap="round" stroke-linejoin="round" /><rect x="303.2" y="308.4" width="2.8" height="3.2" rx=".6" fill="none" stroke="#1a1a1a" stroke-width="0.95" stroke-linecap="round" stroke-linejoin="round" /><rect x="303.2" y="313.4" width="2.8" height="3.2" rx=".6" fill="none" stroke="#1a1a1a" stroke-width="0.95" stroke-linecap="round" stroke-linejoin="round" /><path d="M743,307.6 H757 M747.2,307.4 Q747.6,305.5 749,305.5 H751 Q752.4,305.5 752.8,307.4 M744.6,307.9 V318.8 Q744.6,320.2 746,320.2 H754 Q755.4,320.2 755.4,318.8 V307.9 M747.4,310.2 V317.8 M750,310.2 V317.8 M752.5,310.2 V317.8" fill="none" stroke="#111" stroke-width="1.1" stroke-linecap="round" stroke-linejoin="round" /><rect x="765.7" y="305.6" width="11.8" height="11.8" rx="1.5" fill="none" stroke="#111" stroke-width="1.15" stroke-linecap="round" stroke-linejoin="round" /><path d="M765.4,308.5 H764.2 Q762.7,308.5 762.7,310 V318.7 Q762.7,320.2 764.2,320.2 H772.6 Q774.1,320.2 774.1,318.7 V317.7" fill="none" stroke="#111" stroke-width="1.15" stroke-linecap="round" stroke-linejoin="round" /><rect x="294.4" y="335.4" width="2.8" height="3.2" rx=".6" fill="none" stroke="#1a1a1a" stroke-width="0.95" stroke-linecap="round" stroke-linejoin="round" /><rect x="294.4" y="340.4" width="2.8" height="3.2" rx=".6" fill="none" stroke="#1a1a1a" stroke-width="0.95" stroke-linecap="round" stroke-linejoin="round" /><rect x="298.8" y="335.4" width="2.8" height="3.2" rx=".6" fill="none" stroke="#1a1a1a" stroke-width="0.95" stroke-linecap="round" stroke-linejoin="round" /><rect x="298.8" y="340.4" width="2.8" height="3.2" rx=".6" fill="none" stroke="#1a1a1a" stroke-width="0.95" stroke-linecap="round" stroke-linejoin="round" /><rect x="303.2" y="335.4" width="2.8" height="3.2" rx=".6" fill="none" stroke="#1a1a1a" stroke-width="0.95" stroke-linecap="round" stroke-linejoin="round" /><rect x="303.2" y="340.4" width="2.8" height="3.2" rx=".6" fill="none" stroke="#1a1a1a" stroke-width="0.95" stroke-linecap="round" stroke-linejoin="round" /><path d="M743,334.6 H757 M747.2,334.4 Q747.6,332.5 749,332.5 H751 Q752.4,332.5 752.8,334.4 M744.6,334.9 V345.8 Q744.6,347.2 746,347.2 H754 Q755.4,347.2 755.4,345.8 V334.9 M747.4,337.2 V344.8 M750,337.2 V344.8 M752.5,337.2 V344.8" fill="none" stroke="#111" stroke-width="1.1" stroke-linecap="round" stroke-linejoin="round" /><rect x="765.7" y="332.6" width="11.8" height="11.8" rx="1.5" fill="none" stroke="#111" stroke-width="1.15" stroke-linecap="round" stroke-linejoin="round" /><path d="M765.4,335.5 H764.2 Q762.7,335.5 762.7,337 V345.7 Q762.7,347.2 764.2,347.2 H772.6 Q774.1,347.2 774.1,345.7 V344.7" fill="none" stroke="#111" stroke-width="1.15" stroke-linecap="round" stroke-linejoin="round" /><rect x="294.4" y="362.4" width="2.8" height="3.2" rx=".6" fill="none" stroke="#fff" stroke-width="0.95" stroke-linecap="round" stroke-linejoin="round" /><rect x="294.4" y="367.4" width="2.8" height="3.2" rx=".6" fill="none" stroke="#fff" stroke-width="0.95" stroke-linecap="round" stroke-linejoin="round" /><rect x="298.8" y="362.4" width="2.8" height="3.2" rx=".6" fill="none" stroke="#fff" stroke-width="0.95" stroke-linecap="round" stroke-linejoin="round" /><rect x="298.8" y="367.4" width="2.8" height="3.2" rx=".6" fill="none" stroke="#fff" stroke-width="0.95" stroke-linecap="round" stroke-linejoin="round" /><rect x="303.2" y="362.4" width="2.8" height="3.2" rx=".6" fill="none" stroke="#fff" stroke-width="0.95" stroke-linecap="round" stroke-linejoin="round" /><rect x="303.2" y="367.4" width="2.8" height="3.2" rx=".6" fill="none" stroke="#fff" stroke-width="0.95" stroke-linecap="round" stroke-linejoin="round" /><path d="M743,361.6 H757 M747.2,361.4 Q747.6,359.5 749,359.5 H751 Q752.4,359.5 752.8,361.4 M744.6,361.9 V372.8 Q744.6,374.2 746,374.2 H754 Q755.4,374.2 755.4,372.8 V361.9 M747.4,364.2 V371.8 M750,364.2 V371.8 M752.5,364.2 V371.8" fill="none" stroke="#111" stroke-width="1.1" stroke-linecap="round" stroke-linejoin="round" /><rect x="765.7" y="359.6" width="11.8" height="11.8" rx="1.5" fill="none" stroke="#111" stroke-width="1.15" stroke-linecap="round" stroke-linejoin="round" /><path d="M765.4,362.5 H764.2 Q762.7,362.5 762.7,364 V372.7 Q762.7,374.2 764.2,374.2 H772.6 Q774.1,374.2 774.1,372.7 V371.7" fill="none" stroke="#111" stroke-width="1.15" stroke-linecap="round" stroke-linejoin="round" /><polygon points="559,354 565.6,354 559,360.6" fill="#d04a36"/><path d="M797.2,514.8 L791.2,520.6 L797.2,526.4 Z" fill="none" stroke="#fff" stroke-width="1.4" stroke-linecap="round" stroke-linejoin="round" /><path d="M1513,234 H1521.2 L1517.1,238.5 Z" fill="none" stroke="#111" stroke-width="1.5" stroke-linecap="round" stroke-linejoin="round" /><path d="M1513,276 H1521.2 L1517.1,280.5 Z" fill="none" stroke="#111" stroke-width="1.5" stroke-linecap="round" stroke-linejoin="round" /><path d="M1513,318 H1521.2 L1517.1,322.5 Z" fill="none" stroke="#111" stroke-width="1.5" stroke-linecap="round" stroke-linejoin="round" /><rect x="1514.7" y="354.7" width="4.6" height="3.6" rx=".6" fill="none" stroke="#111" stroke-width="1.1" stroke-linecap="round" stroke-linejoin="round" /><rect x="1507.5" y="365.7" width="3.9" height="3.5" rx=".6" fill="none" stroke="#111" stroke-width="1.1" stroke-linecap="round" stroke-linejoin="round" /><rect x="1514.7" y="365.7" width="3.9" height="3.5" rx=".6" fill="none" stroke="#555" stroke-width="1.1" stroke-linecap="round" stroke-linejoin="round" /><rect x="1522.7" y="365.7" width="3.9" height="3.5" rx=".6" fill="none" stroke="#111" stroke-width="1.1" stroke-linecap="round" stroke-linejoin="round" /><path d="M1509.5,365.4 V361.5 H1524.6 V365.4" fill="none" stroke="#111" stroke-width="1.1" stroke-linecap="round" stroke-linejoin="round" /><path d="M1517,358.6 V365.4" fill="none" stroke="#777" stroke-width="1.4" stroke-linecap="round" stroke-linejoin="round" /><g filter="url(#mk)"><polygon points="896.2,382.4 915.6,384.6 918.2,404.8 907.6,414.4 884,394" fill="#fff"/><circle cx="882.1" cy="418.3" r="27.4" fill="#fff"/></g><polygon points="896.6,383.2 914.7,385.3 917.1,404.2 907,413 885.2,393.6" fill="#03c03c"/><circle cx="882.1" cy="418.3" r="25.8" fill="#03c03c"/><circle cx="882.1" cy="418.3" r="19.1" fill="#d4d4d4"/><circle cx="882.1" cy="418.9" r="18.0" fill="#fff"/><path d="M871.3,419.2 L878.4,426.2 L892,412" fill="none" stroke="#03c03c" stroke-width="3.6" stroke-linecap="round" stroke-linejoin="round"/><path d="M684.6,804.6 L693.4,813.4 M693.4,804.6 L684.6,813.4" fill="none" stroke="#111" stroke-width="1.7" stroke-linecap="round" stroke-linejoin="round" /><path d="M722.2,804.6 A7.1,7.1 0 1 1 723.4,814.6 M720.4,801.4 V806.6 H725.8" fill="none" stroke="#e28e5a" stroke-width="1.05" stroke-linecap="round" stroke-linejoin="round" /><path d="M760.4,809 H771.6 M766,803.4 V814.6" fill="none" stroke="#fdf1ea" stroke-width="1.8" stroke-linecap="round" stroke-linejoin="round" /><rect x="1381" y="804" width="11" height="13.4" rx="1.6" fill="none" stroke="#62c866" stroke-width="1.05" stroke-linecap="round" stroke-linejoin="round" /><path d="M1384.4,804 Q1384.6,802.2 1386.5,802.2 Q1388.4,802.2 1388.6,804" fill="none" stroke="#62c866" stroke-width="1.05" stroke-linecap="round" stroke-linejoin="round" /><path d="M1383.8,808.4 L1384.8,809.4 L1386.6,807.6 M1387.8,808.8 H1390 M1383.8,812.6 H1385.4 M1387.2,812.6 H1390" fill="none" stroke="#62c866" stroke-width="1.0" stroke-linecap="round" stroke-linejoin="round" /><path d="M1439.6,805 Q1439.6,803.6 1441,803.6 H1449.2 L1452.4,806.8 V814.8 Q1452.4,816.2 1451,816.2 H1441 Q1439.6,816.2 1439.6,814.8 Z M1442.2,803.8 V807.4 H1448.6 V803.8" fill="none" stroke="#fff" stroke-width="1.1" stroke-linecap="round" stroke-linejoin="round" /><circle cx="1446" cy="812" r="2.4" fill="none" stroke="#fff" stroke-width="1.15" stroke-linecap="round" stroke-linejoin="round" /></svg></div></body></html>
